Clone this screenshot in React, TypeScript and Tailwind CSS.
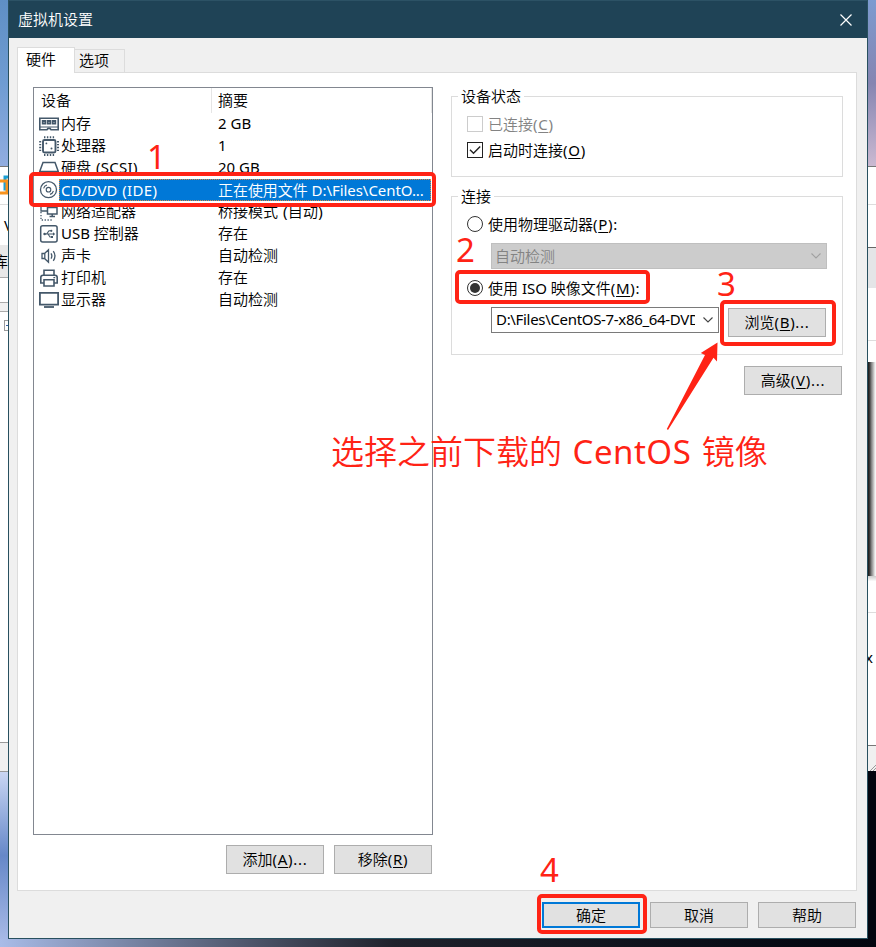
import type { ReactNode } from "react";

const ICON = "#44586a";

function Frame({ children }: { children: ReactNode }) {
  return (
    <svg width="20" height="20" viewBox="0 0 20 20" fill="none" stroke={ICON} strokeWidth="1.3" className="shrink-0">
      {children}
    </svg>
  );
}

const MemoryIcon = () => (
  <Frame>
    <path d="M.8 4.3H19.2V15.7H12L11 14.4H9L8 15.7H.8Z" strokeWidth="1.6" />
    <path d="M1 13H19" strokeWidth="1" />
    <path d="M3.7 7h2.6v2.6h-2.6zM8.7 7h2.6v2.6h-2.6zM13.7 7h2.6v2.6h-2.6z" strokeWidth="1.8" />
  </Frame>
);

const CpuIcon = () => (
  <Frame>
    <rect x="4" y="4" width="12.5" height="12.5" rx="1.5" strokeWidth="1.9" />
    <path d="M5 1.2H16M5 19H16M1.2 5V16M19 5V16" strokeWidth="2" strokeDasharray="1.4 1.5" />
    <circle cx="7.4" cy="7.4" r=".9" fill={ICON} stroke="none" />
    <circle cx="12.5" cy="12.5" r="1" fill={ICON} stroke="none" />
  </Frame>
);

const DiskIcon = () => (
  <Frame>
    <path d="M4 4.5H16L19.3 13.5V17H.7V13.5ZM1 13.5H19" strokeWidth="1.5" />
  </Frame>
);

const DiscIcon = () => (
  <Frame>
    <circle cx="9.5" cy="9.7" r="8" fill="#fff" strokeWidth="1.3" />
    <circle cx="9.5" cy="9.7" r="2.3" strokeWidth="1.1" />
    <path d="M4.6 8.4A5 5 0 0 1 8 5M14.4 11A5 5 0 0 1 11 14.4" strokeWidth="1.1" />
  </Frame>
);

const NetworkIcon = () => (
  <Frame>
    <path d="M2 3.5H10V9H2Z" />
    <rect x="8.5" y="5.5" width="9.5" height="6.5" fill="#fff" strokeWidth="1.5" />
    <path d="M13.2 12V14.3M10.5 14.5H16" strokeWidth="1.5" />
    <path d="M2 10V18H13" strokeDasharray="1.3 1.6" />
  </Frame>
);

const UsbIcon = () => (
  <Frame>
    <rect x="1.7" y="1.7" width="16.4" height="16.4" rx="2" strokeWidth="1.5" />
    <path d="M5.5 10H15M7.5 10L10 6.8H12M9 10L11 13H12.5" strokeWidth="1.1" />
    <circle cx="5.6" cy="10" r="1.3" fill={ICON} stroke="none" />
    <circle cx="12.3" cy="6.8" r="1.1" fill={ICON} stroke="none" />
    <path d="M12 12h2v2h-2zM14 8.3L16.2 10L14 11.7Z" fill={ICON} stroke="none" />
  </Frame>
);

const SoundIcon = () => (
  <Frame>
    <path d="M3 7.5H5.5L9.5 3.7V16.3L5.5 12.5H3ZM5.8 7.5V12.5" />
    <path d="M12 7.3Q13.7 10 12 12.7M14.3 5.2Q17.6 10 14.3 14.8" />
  </Frame>
);

const PrinterIcon = () => (
  <Frame>
    <path d="M5 7V2.3H15V7M5 15H1.8V9.5Q1.8 7.2 4 7.2H16Q18.2 7.2 18.2 9.5V15H15" strokeWidth="1.6" />
    <path d="M5 11.7H15V18H5Z" strokeWidth="1.6" />
    <path d="M14.4 9.6h1.8" />
  </Frame>
);

const DisplayIcon = () => (
  <Frame>
    <path d="M.9 2.9H19.1V14.6H.9Z" strokeWidth="1.8" />
    <path d="M5 17H15" strokeWidth="1.8" />
  </Frame>
);

const devices = [
  { icon: <MemoryIcon />, name: "内存", summary: "2 GB" },
  { icon: <CpuIcon />, name: "处理器", summary: "1" },
  { icon: <DiskIcon />, name: "硬盘 (SCSI)", summary: "20 GB" },
  { icon: <DiscIcon />, name: "CD/DVD (IDE)", summary: "正在使用文件 D:\\Files\\CentO...", selected: true },
  { icon: <NetworkIcon />, name: "网络适配器", summary: "桥接模式 (自动)" },
  { icon: <UsbIcon />, name: "USB 控制器", summary: "存在" },
  { icon: <SoundIcon />, name: "声卡", summary: "自动检测" },
  { icon: <PrinterIcon />, name: "打印机", summary: "存在" },
  { icon: <DisplayIcon />, name: "显示器", summary: "自动检测" },
];

// Spreads parenthesised latin runs slightly wider than the text around them.
function Label({ text }: { text: string }) {
  const at = text.indexOf("(");
  if (at < 0) return <>{text}</>;
  return (
    <>
      {text.slice(0, at)}
      <span className="ml-px tracking-[0.3px]">{text.slice(at)}</span>
    </>
  );
}

function Button({
  children,
  className = "h-[29px] border border-[#adadad] pb-[2px]",
}: {
  children: ReactNode;
  className?: string;
}) {
  return (
    <button className={`flex w-[98px] shrink-0 items-center justify-center bg-[#e1e1e1] whitespace-pre ${className}`}>
      <span>{children}</span>
    </button>
  );
}

const Key = ({ k, tail = "" }: { k: string; tail?: string }) => (
  <span className="tracking-[0.7px]">
    (<span className="underline decoration-1 underline-offset-2">{k}</span>){tail}
  </span>
);

const Chevron = ({ color }: { color: string }) => (
  <svg width="10" height="6" viewBox="0 0 10 6" fill="none" stroke={color} strokeWidth="1.1" className="shrink-0">
    <path d="M.5 .5L5 5L9.5 .5" />
  </svg>
);

function DeviceList() {
  return (
    <div className="mt-[14px] flex w-[400px] flex-col">
      <div className="h-[748px] border border-[#828790] bg-white">
        <div className="flex h-[25px] items-center">
          <div className="flex h-full w-[178px] items-center border-r border-[#e5e5e5] pb-px pl-[7px]">设备</div>
          <div className="flex h-full w-[220px] items-center border-r border-[#e5e5e5] pb-px pl-[6px]">摘要</div>
        </div>
        {devices.map((d) => (
          <div key={d.name} className="flex h-[22px] items-center pl-[5px] whitespace-pre">
            {d.icon}
            <div
              className={
                d.selected
                  ? "flex h-[22px] w-[372px] items-center border border-dotted border-[#e08a3c] bg-[#0078d7] pb-px tracking-[-0.05px] text-white"
                  : "flex h-[22px] w-[372px] items-center border border-transparent pb-[2px]"
              }
            >
              <span className="w-[158px] pl-px">
                <Label text={d.name} />
              </span>
              <span>
                <Label text={d.summary} />
              </span>
            </div>
          </div>
        ))}
      </div>
      <div className="mt-[10px] mr-px flex justify-end gap-[10px]">
        <Button>添加<Key k="A" tail="..." /></Button>
        <Button>移除<Key k="R" /></Button>
      </div>
    </div>
  );
}

function Settings() {
  return (
    <div className="mt-[13px] ml-[18px] flex w-[392px] flex-col">
      <fieldset className="h-[91px] border border-[#dcdcdc]">
        <legend className="ml-[6px] h-[21px] px-[3px] leading-[20px]">设备状态</legend>
        <div className="mt-1 pl-[15px]">
          <div className="flex h-[26px] items-center gap-[5px] text-[#838383]">
            <span className="size-4 border border-[#cccccc]" />
            <span className="pb-px">已连接<Key k="C" /></span>
          </div>
          <div className="flex h-[26px] items-center gap-[5px]">
            <svg width="16" height="16" viewBox="0 0 16 16" fill="none" stroke="#222">
              <rect x=".5" y=".5" width="15" height="15" />
              <path d="M3 7.8L6.5 11.3L13.2 4.4" strokeWidth="1.4" />
            </svg>
            <span className="pb-px">启动时连接<Key k="O" /></span>
          </div>
        </div>
      </fieldset>
      <fieldset className="mt-[9px] h-[169px] border border-[#dcdcdc]">
        <legend className="ml-[6px] h-[21px] px-[3px] leading-[20px]">连接</legend>
        <div className="pl-[15px]">
          <div className="mb-[2px] flex h-[34px] items-center gap-[5px]">
            <span className="size-4 rounded-full border border-[#333]" />
            <span className="pb-px">使用物理驱动器<Key k="P" tail=":" /></span>
          </div>
          <div className="ml-6 flex h-[26px] w-[336px] items-center justify-between border border-[#bfbfbf] bg-[#cccccc] pr-[5px] pl-[3px] text-[#838383]">
            <span className="pb-px">自动检测</span>
            <Chevron color="#a0a0a0" />
          </div>
          <div className="flex h-[38px] items-center gap-[5px]">
            <span className="flex size-4 items-center justify-center rounded-full border border-[#333]">
              <span className="size-[10px] rounded-full bg-[#333]" />
            </span>
            <span className="pb-px whitespace-pre">使用 ISO 映像文件<Key k="M" tail=":" /></span>
          </div>
          <div className="ml-6 flex items-start">
            <div className="flex h-[26px] w-[228px] items-center justify-between border border-[#7a7a7a] bg-white pr-[5px] pb-px pl-1">
              <span className="w-[199px] overflow-hidden pb-px tracking-[-0.32px] whitespace-pre">
                D:\Files\CentOS-7-x86_64-DVD
              </span>
              <Chevron color="#444" />
            </div>
            <div className="mt-px ml-[9px]">
              <Button>浏览<Key k="B" tail="..." /></Button>
            </div>
          </div>
        </div>
      </fieldset>
      <div className="mt-[11px] mr-px flex justify-end">
        <Button>高级<Key k="V" tail="..." /></Button>
      </div>
    </div>
  );
}

function Dialog() {
  return (
    <div className="flex h-[939px] w-[860px] flex-col border-x border-b border-[#28505f] bg-[#f0f0f0]">
      <div className="flex h-[38px] shrink-0 items-center justify-between border-t border-[#2c5265] bg-[#1f4356] pr-[15px] pl-[9px] text-white">
        <span className="pb-[2px]">虚拟机设置</span>
        <svg width="12" height="12" viewBox="0 0 12 12" stroke="#fff" strokeWidth="1.2">
          <path d="M.5 .5L11.5 11.5M11.5 .5L.5 11.5" />
        </svg>
      </div>
      <div className="z-10 -mb-px ml-2 flex h-[35px] shrink-0 items-end">
        <div className="h-[26px] w-[58px] border border-b-0 border-[#dcdcdc] bg-white pl-2 leading-[22px]">硬件</div>
        <div className="mb-px h-[23px] w-[50px] border border-b-0 border-l-0 border-[#dcdcdc] pl-1 leading-[21px]">
          选项
        </div>
      </div>
      <div className="ml-2 flex h-[819px] w-[840px] shrink-0 border border-[#dcdcdc] bg-white pl-[15px]">
        <DeviceList />
        <Settings />
      </div>
      <div className="mt-[11px] flex justify-end gap-[10px] pr-[11px]">
        <Button className="h-[26px] border-2 border-[#0078d7]">确定</Button>
        <Button className="h-[26px] border border-[#adadad]">取消</Button>
        <Button className="h-[26px] border border-[#adadad]">帮助</Button>
      </div>
    </div>
  );
}

function LeftBackdrop() {
  return (
    <div className="flex h-[939px] w-2 shrink-0 flex-col overflow-hidden">
      <div className="h-[166px] bg-linear-to-b from-[#5f8fc4] via-[#6f9cd2] to-[#91ade0]" />
      <div className="h-[38px] border-t border-[#777] bg-white">
        <svg width="8" height="37" viewBox="0 0 8 37" fill="none" strokeWidth="3">
          <path d="M9 10H5V22H9" stroke="#1a9fd4" />
          <path d="M0 14H7V26H0" stroke="#f7931e" />
        </svg>
      </div>
      <div className="flex h-[41px] items-center border-t border-[#ddd] bg-white pl-1">V</div>
      <div className="flex h-[33px] items-center justify-end border-b border-[#aaa] bg-[#e8e8e8]">库</div>
      <div className="h-6 bg-white" />
      <div className="h-[10px] border-y border-[#aaa] bg-[#f0f0f0]" />
      <div className="h-[430px] bg-white pt-2 pl-1">
        <div className="flex h-[11px] w-[11px] items-center border border-[#999] pl-px">
          <span className="h-px w-[7px] bg-[#3b62a5]" />
        </div>
      </div>
      <div className="h-[30px] border-y border-[#999] bg-[#f0f0f0]" />
      <div className="flex-1 bg-linear-to-b from-[#cad6f3] via-[#6688c8] to-[#a7b9e6]" />
    </div>
  );
}

function RightBackdrop() {
  return (
    <div className="flex h-[939px] w-2 shrink-0 flex-col overflow-hidden">
      <div className="h-[166px] bg-linear-to-b from-[#7c9bd0] via-[#8585b1] to-[#cbb9d1]" />
      <div className="h-[38px] border-t border-[#777] bg-white" />
      <div className="h-[43px] border-t border-[#ddd] bg-white" />
      <div className="h-[41px] border-t border-[#666] bg-[#e4e5e7]" />
      <div className="h-[52px] bg-white" />
      <div className="h-[22px] border-t border-[#ddd] bg-white" />
      <div className="h-[214px] bg-linear-to-r from-[#222] from-10% via-[#888] via-45% to-[#f4f4f4] to-90%" />
      <div className="h-[36px] bg-linear-to-b from-[#ccc] to-white to-15%" />
      <div className="flex h-[133px] items-start border-t border-[#ddd] bg-white pt-[34px]">
        <span className="-ml-[3px]">x</span>
      </div>
      <div className="flex h-[26px] items-end border-t border-[#777] bg-[#f0f0f0]">
        <svg width="8" height="8" stroke="#999">
          <path d="M2 8L8 2M5 8L8 5" />
        </svg>
      </div>
      <div className="flex-1 bg-[#02050e]" />
    </div>
  );
}

function Annotations() {
  return (
    <div className="pointer-events-none absolute inset-0 font-['Noto_Sans','Noto_Sans_CJK_SC_DemiLight','Noto_Sans_CJK_SC',sans-serif] text-[33px] leading-[40px] text-[#ff2315]">
      <div className="absolute top-[172px] left-[29px] h-[35px] w-[407px] rounded-[5px] border-4 border-[#ff2315]" />
      <div className="absolute top-[270px] left-[455px] h-[34px] w-[195px] rounded-[5px] border-4 border-[#ff2315]" />
      <div className="absolute top-[300px] left-[720px] h-[46px] w-[116px] rounded-[5px] border-4 border-[#ff2315]" />
      <div className="absolute top-[894px] left-[537px] h-[40px] w-[110px] rounded-[5px] border-4 border-[#ff2315]" />
      <span className="absolute top-[137px] left-[147px]">1</span>
      <span className="absolute top-[230px] left-[456px]">2</span>
      <span className="absolute top-[264px] left-[717px]">3</span>
      <span className="absolute top-[850px] left-[540px]">4</span>
      <span className="absolute top-[432px] left-[331px] whitespace-pre [word-spacing:2px]">
        选择之前下载的 <span className="tracking-[0.5px]">CentOS</span> 镜像
      </span>
      <svg className="absolute top-[340px] left-[660px]" width="60" height="92" viewBox="660 340 60 92">
        <path d="M666.8 429L705 355L700.8 353L717.5 342.5L717 361.5L713.5 357.8L668 430Z" fill="#ff2315" />
      </svg>
    </div>
  );
}

export default function App() {
  return (
    <div className="relative h-[947px] w-[876px] overflow-hidden font-['Noto_Sans','Noto_Sans_CJK_SC_DemiLight','Noto_Sans_CJK_SC_Light','Noto_Sans_CJK_SC',sans-serif] text-[15px] leading-[20px] text-black">
      <div className="flex">
        <LeftBackdrop />
        <Dialog />
        <RightBackdrop />
      </div>
      <div className="h-2 bg-linear-to-r from-[#a9bce8] via-[#20222c] via-45% to-[#03060f]" />
      <Annotations />
    </div>
  );
}
